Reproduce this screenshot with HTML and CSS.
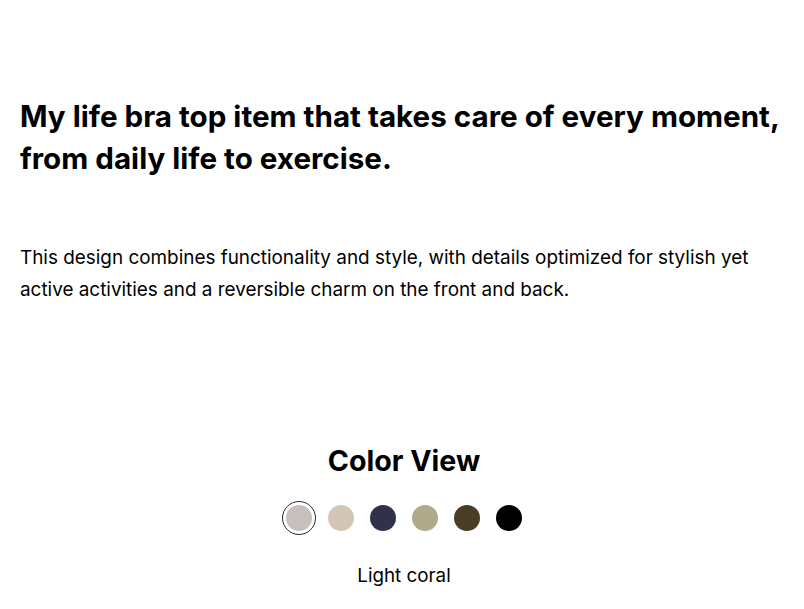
FILE: index.html
```html
<!DOCTYPE html>
<html>
<head>
<meta charset="utf-8">
<link rel="stylesheet" href="styles.css">
</head>
<body>
<main class="page">
  <section class="intro">
    <h1 class="headline">My life bra top item that takes care of every moment, from daily life to exercise.</h1>
    <p class="desc">This design combines functionality and style, with details optimized for stylish yet active activities and a reversible charm on the front and back.</p>
  </section>
  <section class="colors">
    <h2 class="colors-title">Color View</h2>
    <div class="swatches">
      <span class="swatch selected"><span class="dot c1"></span></span>
      <span class="swatch"><span class="dot c2"></span></span>
      <span class="swatch"><span class="dot c3"></span></span>
      <span class="swatch"><span class="dot c4"></span></span>
      <span class="swatch"><span class="dot c5"></span></span>
      <span class="swatch"><span class="dot c6"></span></span>
    </div>
    <p class="color-name">Light coral</p>
  </section>
</main>
</body>
</html>
```
FILE: styles.css
```css
html, body { margin: 0; padding: 0; background: #fff; }
body { font-family: "Inter", "Noto Sans", sans-serif; color: #000; }
.page { width: 804px; height: 609px; overflow: hidden; box-sizing: border-box; padding: 95px 16px 0 20px; }
.headline {
  margin: 0;
  font-size: 29.6px;
  font-weight: 700;
  line-height: 42px;
}
.desc {
  margin: 63px 0 0 0;
  font-size: 18.9px;
  line-height: 32px;
  font-weight: 400;
}
.colors { display: flex; flex-direction: column; align-items: center; margin-top: 135px; }
.colors-title { margin: 0; font-size: 28.6px; font-weight: 700; line-height: 40px; }
.swatches { display: flex; gap: 8px; margin-top: 20px; align-items: center; }
.swatch { width: 34px; height: 34px; border-radius: 50%; display: flex; align-items: center; justify-content: center; box-sizing: border-box; border: 1px solid transparent; }
.swatch.selected { border-color: #2a2a2a; }
.dot { width: 26px; height: 26px; border-radius: 50%; display: block; }
.c1 { background: #c8bfbc; }
.c2 { background: #d3c6b6; }
.c3 { background: #2f3249; }
.c4 { background: #b0aa8b; }
.c5 { background: #4a3c25; }
.c6 { background: #000; }
.color-name { margin: 29px 0 0 0; font-size: 18.8px; line-height: 24px; }
```
